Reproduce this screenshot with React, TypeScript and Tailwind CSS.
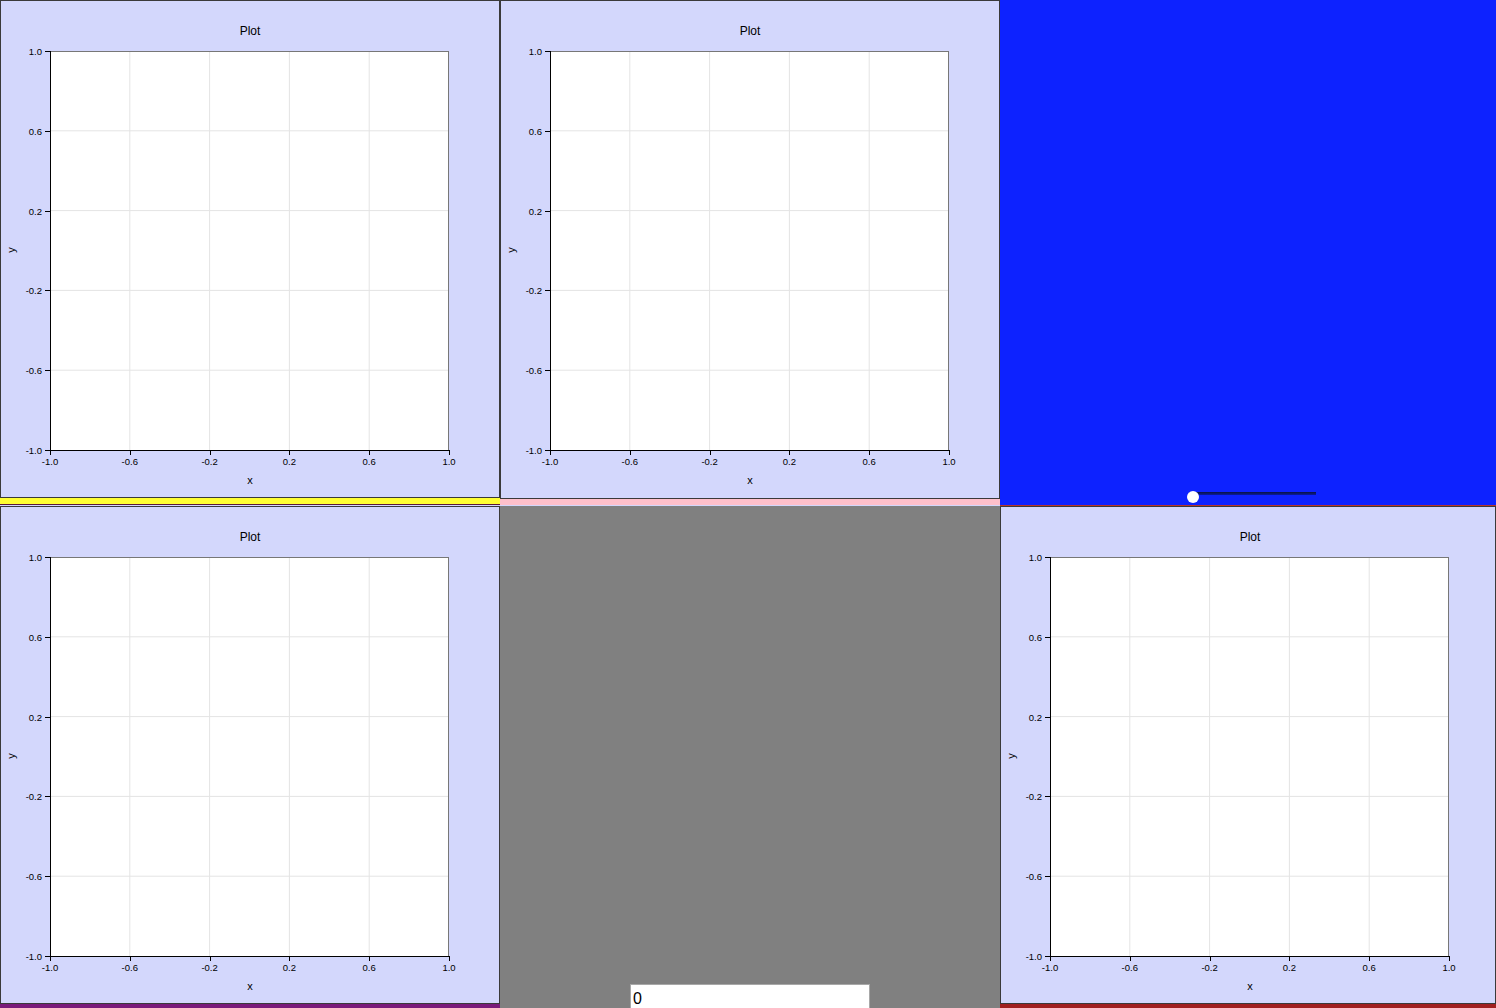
import React from 'react';

const ticks = [-1.0, -0.6, -0.2, 0.2, 0.6, 1.0];
const fmt = (v: number) => v.toFixed(1);

// coordinates are panel-relative (panel has a 1px border, svg sits inside it)
function PlotChart() {
  const L = 49, T = 50, S = 399;
  const px = (v: number) => L + ((v + 1) / 2) * S;
  const py = (v: number) => T + ((1 - v) / 2) * S;
  return (
    <svg width={498} height={490} className="block" style={{ fontFamily: '"Liberation Sans", Arial, sans-serif' }}>
      <text x={249} y={34} fontSize={12} textAnchor="middle" fill="#000">Plot</text>
      <rect x={L} y={T} width={S} height={S} fill="#fff" />
      {ticks.slice(1, -1).map(t => (
        <g key={t}>
          <line x1={px(t)} y1={T} x2={px(t)} y2={T + S} stroke="#e4e4e4" strokeWidth={1} />
          <line x1={L} y1={py(t)} x2={L + S} y2={py(t)} stroke="#e4e4e4" strokeWidth={1} />
        </g>
      ))}
      <line x1={L} y1={T + 0.5} x2={L + S} y2={T + 0.5} stroke="#777" strokeWidth={1} />
      <line x1={L + S - 0.5} y1={T} x2={L + S - 0.5} y2={T + S} stroke="#777" strokeWidth={1} />
      <line x1={L + 0.5} y1={T} x2={L + 0.5} y2={T + S + 1} stroke="#000" strokeWidth={1} />
      <line x1={L} y1={T + S + 0.5} x2={L + S} y2={T + S + 0.5} stroke="#000" strokeWidth={1} />
      {ticks.map(t => (
        <g key={'x' + t}>
          <line x1={Math.round(px(t)) + 0.5} y1={T + S} x2={Math.round(px(t)) + 0.5} y2={T + S + 5} stroke="#000" />
          <text x={px(t)} y={T + S + 15} fontSize={9.5} textAnchor="middle" fill="#000">{fmt(t)}</text>
        </g>
      ))}
      {ticks.map(t => (
        <g key={'y' + t}>
          <line x1={L - 5} y1={Math.round(py(t)) + 0.5} x2={L} y2={Math.round(py(t)) + 0.5} stroke="#000" />
          <text x={L - 8} y={py(t) + 4} fontSize={9.5} textAnchor="end" fill="#000">{fmt(t)}</text>
        </g>
      ))}
      <text x={249} y={483} fontSize={11} textAnchor="middle" fill="#000">x</text>
      <text x={0} y={0} fontSize={11} textAnchor="middle" fill="#000" transform="translate(14 249) rotate(-90)">y</text>
    </svg>
  );
}

function PlotPanel({ className }: { className: string }) {
  return (
    <div className={`bg-[#d3d7fc] border border-[#3a3a3a] overflow-hidden ${className}`}>
      <PlotChart />
    </div>
  );
}

export default function App() {
  return (
    <div className="w-[1496px] h-[1008px] overflow-hidden grid grid-cols-[500px_500px_496px] grid-rows-[506px_502px] bg-[#d3d7fc]">
      {/* top row */}
      <div className="flex flex-col">
        <PlotPanel className="h-[498px] shrink-0" />
        <div className="h-[6px] bg-[#ffff33] border-b border-[#5a1a3a] box-content" />
      </div>
      <div className="flex flex-col">
        <PlotPanel className="h-[499px] shrink-0" />
        <div className="h-[6px] bg-[#ffc0cb]" />
      </div>
      <div className="bg-[#0d22ff] border-b border-[#b8342a] flex flex-col justify-end items-center">
        <div className="relative w-[129px] h-[12px] ml-[7px] mb-[3px]">
          <div className="absolute left-[2px] right-0 top-[2px] h-[3px] bg-gradient-to-b from-[#0a1240] to-[#0a1aa0]" />
          <div className="absolute left-0 top-[1px] w-[12px] h-[12px] rounded-full bg-white" />
        </div>
      </div>

      {/* bottom row */}
      <div className="flex flex-col">
        <PlotPanel className="h-[498px] shrink-0" />
        <div className="h-[4px] bg-[#7a1a7a]" />
      </div>
      <div className="bg-[#808080] flex flex-col justify-end items-center overflow-hidden">
        <div className="w-[240px] h-[24px] shrink-0 bg-white border border-[#a8a8a8] border-b-0 px-[2px] text-[16px] leading-[28px] text-black" style={{ fontFamily: '"Liberation Sans", Arial, sans-serif' }}>
          0
        </div>
      </div>
      <div className="flex flex-col">
        <PlotPanel className="h-[498px] shrink-0" />
        <div className="h-[4px] bg-[#a02020]" />
      </div>
    </div>
  );
}
